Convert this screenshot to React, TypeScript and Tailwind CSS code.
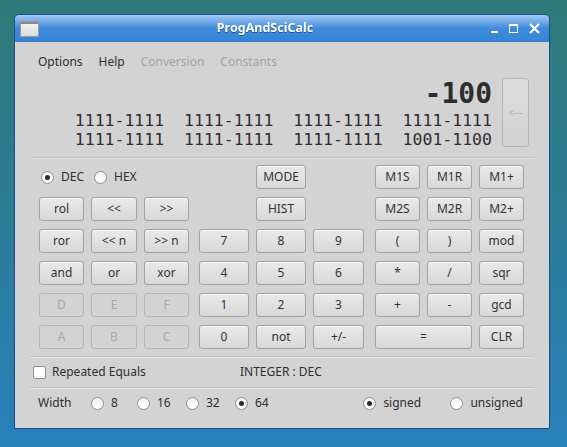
import React from 'react'

type Cell = { t: string; span?: number; dis?: boolean; radio?: boolean } | null

const rows: Cell[][] = [
  [{ t: '', span: 3, radio: true }, null, { t: 'MODE' }, null, { t: 'M1S' }, { t: 'M1R' }, { t: 'M1+' }],
  [{ t: 'rol' }, { t: '<<' }, { t: '>>' }, null, { t: 'HIST' }, null, { t: 'M2S' }, { t: 'M2R' }, { t: 'M2+' }],
  [{ t: 'ror' }, { t: '<< n' }, { t: '>> n' }, { t: '7' }, { t: '8' }, { t: '9' }, { t: '(' }, { t: ')' }, { t: 'mod' }],
  [{ t: 'and' }, { t: 'or' }, { t: 'xor' }, { t: '4' }, { t: '5' }, { t: '6' }, { t: '*' }, { t: '/' }, { t: 'sqr' }],
  [{ t: 'D', dis: true }, { t: 'E', dis: true }, { t: 'F', dis: true }, { t: '1' }, { t: '2' }, { t: '3' }, { t: '+' }, { t: '-' }, { t: 'gcd' }],
  [{ t: 'A', dis: true }, { t: 'B', dis: true }, { t: 'C', dis: true }, { t: '0' }, { t: 'not' }, { t: '+/-' }, { t: '=', span: 2 }, { t: 'CLR' }],
]

const btnBase =
  'h-[24px] rounded-[3px] border flex items-center justify-center text-[12px] leading-none'
const btnOn =
  'border-[#a2a2a2] bg-linear-to-b from-[#e9e9e9] to-[#d8d8d8] text-[#333] shadow-[inset_0_1px_0_#f5f5f5]'
const btnOff = 'border-[#b6b6b6] bg-[#d3d3d3] text-[#a9a9a9]'

function Radio({ checked }: { checked?: boolean }) {
  return (
    <span className="w-[13px] h-[13px] rounded-full border border-[#8f8f8f] bg-linear-to-b from-[#f2f2f2] to-white flex items-center justify-center shrink-0">
      {checked && <span className="w-[5px] h-[5px] rounded-full bg-[#2b2b2b]" />}
    </span>
  )
}

function Sep() {
  return <div className="h-px bg-[#c3c3c3] shadow-[0_1px_0_#e2e2e2]" />
}

export default function App() {
  return (
    <div className="w-[567px] h-[447px] overflow-hidden bg-linear-to-b from-[#2e7a79] via-[#2c7c96] to-[#2980bb] pt-[14px] pl-[14px] font-['Noto_Sans',sans-serif]">
      <div className="w-[536px] h-[415px] flex flex-col border border-[#1e4f8c] rounded-t-[5px] overflow-hidden">
        {/* title bar */}
        <div className="h-[27px] shrink-0 flex items-center bg-linear-to-b from-[#a2c9f2] via-[#3e8adb] to-[#3784d6] px-[5px]">
          <div className="w-[19px] h-[16px] border border-[#9a9a9a] bg-linear-to-b from-[#f4f4f4] to-[#dcdcdc] flex flex-col">
            <div className="h-[2px] bg-[#8c8c8c]" />
          </div>
          <div className="flex-1 text-center text-white font-bold text-[12.5px] drop-shadow-[0_1px_0_rgba(0,0,0,0.35)]">
            ProgAndSciCalc
          </div>
          <div className="flex items-center gap-[10px] pr-[4px]">
            <svg width="8" height="10" viewBox="0 0 8 10">
              <rect x="0" y="7" width="7" height="2" fill="#fff" />
            </svg>
            <svg width="10" height="10" viewBox="0 0 10 10">
              <rect x="0.5" y="0.5" width="8" height="8" fill="none" stroke="#fff" strokeWidth="1" />
              <rect x="0" y="0" width="9" height="2" fill="#fff" />
            </svg>
            <svg width="11" height="11" viewBox="0 0 11 11">
              <path d="M1 1 L10 10 M10 1 L1 10" stroke="#fff" strokeWidth="2.2" />
            </svg>
          </div>
        </div>

        <div className="flex-1 bg-[#d3d3d3] px-[15px] flex flex-col text-[12px] text-[#2f2f2f]">
          {/* menu */}
          <div className="mt-[8px] h-[24px] flex items-center gap-[16px] pl-[8px]">
            <span>Options</span>
            <span>Help</span>
            <span className="text-[#a3a3a3]">Conversion</span>
            <span className="text-[#a3a3a3]">Constants</span>
          </div>

          {/* display */}
          <div className="h-[83px] flex items-start pr-[5px]">
            <div className="flex-1 flex flex-col items-end pt-[5px] font-['DejaVu_Sans_Mono',monospace] text-[#2e2e2e]">
              <div className="text-[28px] leading-[30px] font-bold">-100</div>
              <div className="mt-[2px] text-[16.5px] leading-[19px] whitespace-pre">1111-1111  1111-1111  1111-1111  1111-1111</div>
              <div className="text-[16.5px] leading-[19px] whitespace-pre">1111-1111  1111-1111  1111-1111  1001-1100</div>
            </div>
            <div className="ml-[10px] mt-[4px] w-[27px] h-[69px] rounded-[3px] border border-[#b3b3b3] bg-linear-to-b from-[#dedede] to-[#d2d2d2] flex items-center justify-center text-[9px] text-[#a8a8a8]">
              &lt;---
            </div>
          </div>

          <Sep />

          {/* keypad */}
          <div className="mt-[7px] ml-[9px] grid grid-cols-[45px_46px_45px_53px_50px_55px_45px_45px_45px] auto-rows-[24px] gap-x-[7px] gap-y-[8px]">
            {rows.map((row, ri) => {
              let col = 0
              return row.map((c, ci) => {
                const idx = col
                col += c?.span ?? 1
                if (!c) return <div key={`${ri}-${ci}`} />
                if (c.radio) {
                  return (
                    <div key={`${ri}-${ci}`} className="col-span-3 flex items-center pl-[2px]">
                      <Radio checked />
                      <span className="ml-[7px]">DEC</span>
                      <span className="ml-[10px]">
                        <Radio />
                      </span>
                      <span className="ml-[7px]">HEX</span>
                    </div>
                  )
                }
                let w = 'w-full'
                if (idx === 3) w = 'w-[50px] justify-self-end'
                if (idx === 5) w = 'w-[51px] justify-self-start'
                const span = c.span === 2 ? 'col-span-2' : ''
                return (
                  <div key={`${ri}-${ci}`} className={`${btnBase} ${c.dis ? btnOff : btnOn} ${w} ${span}`}>
                    {c.t}
                  </div>
                )
              })
            })}
          </div>

          <div className="mt-[7px]">
            <Sep />
          </div>

          <div className="h-[30px] flex items-center pl-[3px]">
            <span className="w-[13px] h-[13px] rounded-[2px] border border-[#8f8f8f] bg-white" />
            <span className="ml-[6px] w-[188px]">Repeated Equals</span>
            <span>INTEGER : DEC</span>
          </div>

          <Sep />

          <div className="h-[30px] flex items-center pl-[8px] pr-[11px]">
            <span className="w-[53px]">Width</span>
            <div className="w-[46px] flex items-center">
              <Radio />
              <span className="ml-[7px]">8</span>
            </div>
            <div className="w-[49px] flex items-center">
              <Radio />
              <span className="ml-[7px]">16</span>
            </div>
            <div className="w-[49px] flex items-center">
              <Radio />
              <span className="ml-[7px]">32</span>
            </div>
            <div className="flex items-center">
              <Radio checked />
              <span className="ml-[7px]">64</span>
            </div>
            <div className="flex-1" />
            <div className="w-[87px] flex items-center">
              <Radio checked />
              <span className="ml-[7px]">signed</span>
            </div>
            <div className="flex items-center">
              <Radio />
              <span className="ml-[7px]">unsigned</span>
            </div>
          </div>
        </div>
      </div>
    </div>
  )
}
